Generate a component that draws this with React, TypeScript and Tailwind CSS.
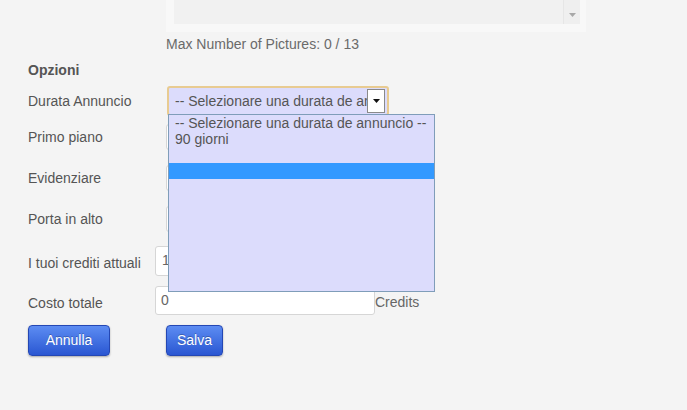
import { useState } from "react";

const rows = ["Primo piano", "Evidenziare", "Porta in alto"];

const options = ["-- Selezionare una durata de annuncio --", "90 giorni", "", ""];

export default function App() {
  const [open] = useState(true);

  return (
    <div className="relative h-[410px] w-[687px] overflow-hidden bg-[#f4f4f4] pl-[28px] font-['Liberation_Sans',Arial,sans-serif] text-[14px] text-[#555]">
      {/* pictures box */}
      <div className="ml-[138px] w-[420px] bg-[#f8f8f8] px-[8px] pb-[8px] pt-0">
        <div className="flex h-[24px] w-[406px] justify-end bg-[#f1f1f1]">
          <div className="flex w-[17px] items-start justify-center border-l border-[#e6e6e6] bg-[#efefef] pt-[13px]">
            <svg width="7" height="4" viewBox="0 0 7 4">
              <path d="M0 0h7L3.5 4z" fill="#a8a8a8" />
            </svg>
          </div>
        </div>
      </div>
      <div className="ml-[138px] mt-[4px] text-[14px] leading-[16px] text-[#6a6a6a]">Max Number of Pictures: 0 / 13</div>

      <div className="mt-[10px] font-bold leading-[16px] text-[#555]">Opzioni</div>

      <div className="mt-[8px] flex h-[30px] items-center">
        <div className="w-[139px]">Durata Annuncio</div>
        <div className="flex h-[30px] w-[222px] items-center rounded-[3px] border-2 border-[#e8cb91] bg-[#dcdcfc] pl-[6px] pr-[2px]">
          <span className="flex-1 overflow-hidden whitespace-nowrap text-[#555]">-- Selezionare una durata de annuncio --</span>
          <span className="flex h-[24px] w-[18px] shrink-0 items-center justify-center border border-[#8a8a8a] bg-white">
            <svg width="7" height="4" viewBox="0 0 7 4">
              <path d="M0 0h7L3.5 4z" fill="#111" />
            </svg>
          </span>
        </div>
      </div>

      {rows.map((r, i) => (
        <div key={r} className={`flex h-[26px] items-center ${i === 0 ? "mt-[8px]" : "mt-[15px]"}`}>
          <div className="w-[138px]">{r}</div>
          <div className="h-[26px] w-[220px] rounded-[3px] border border-[#d6d6d6] bg-white" />
        </div>
      ))}

      <div className="mt-[14px] flex h-[30px] items-center">
        <div className="w-[127px] pt-[4px]">I tuoi crediti attuali</div>
        <div className="flex h-[30px] w-[220px] items-start rounded-[3px] border border-[#d6d6d6] bg-white pl-[6px] pt-[3px] text-[#666]">1</div>
      </div>

      <div className="mt-[10px] flex h-[29px] items-center">
        <div className="w-[127px] pt-[6px]">Costo totale</div>
        <div className="flex h-[29px] w-[220px] items-start rounded-[3px] border border-[#d6d6d6] bg-white pl-[5px] pt-[3px] text-[#666]">0</div>
        <div className="pt-[4px] text-[#666]">Credits</div>
      </div>

      <div className="mt-[10px] flex">
        <button className="h-[31px] w-[82px] rounded-[4px] border border-[#2447b4] bg-gradient-to-b from-[#5d8cf2] to-[#2a56d2] text-white shadow-[0_1px_2px_rgba(0,0,0,0.3)] [text-shadow:0_-1px_0_rgba(0,0,0,0.25)]">
          Annulla
        </button>
        <button className="ml-[56px] h-[31px] w-[57px] rounded-[4px] border border-[#2447b4] bg-gradient-to-b from-[#5d8cf2] to-[#2a56d2] text-white shadow-[0_1px_2px_rgba(0,0,0,0.3)] [text-shadow:0_-1px_0_rgba(0,0,0,0.25)]">
          Salva
        </button>
      </div>

      {/* open dropdown list */}
      {open && (
        <div className="absolute left-[168px] top-[114px] h-[178px] w-[267px] border border-[#7f9db9] bg-[#dcdcfc]">
          {options.map((o, i) => (
            <div
              key={i}
              className={`h-[16px] whitespace-nowrap pl-[6px] leading-[16px] text-[#555] ${i === 3 ? "bg-[#3399ff]" : ""}`}
            >
              {o}
            </div>
          ))}
        </div>
      )}
    </div>
  );
}
